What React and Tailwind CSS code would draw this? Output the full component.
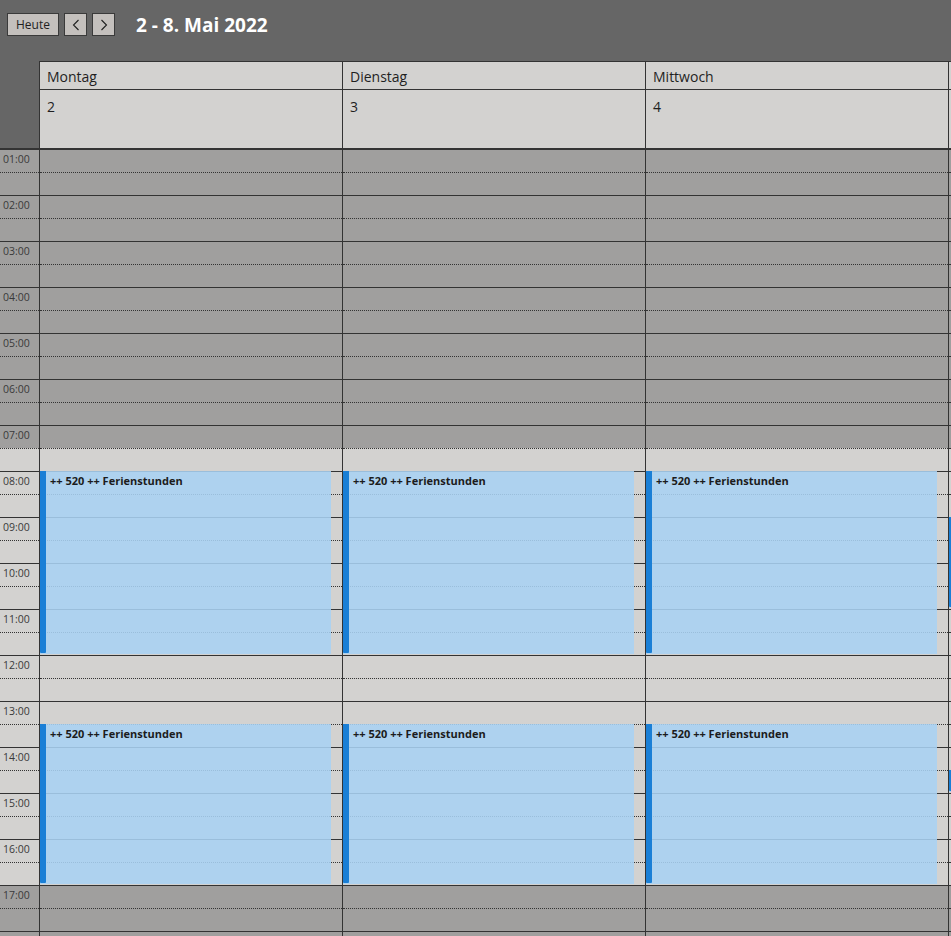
import React from "react";

const days = [
  { name: "Montag", date: 2, events: [{ start: 8, end: 12 }, { start: 13.5, end: 17 }] },
  { name: "Dienstag", date: 3, events: [{ start: 8, end: 12 }, { start: 13.5, end: 17 }] },
  { name: "Mittwoch", date: 4, events: [{ start: 8, end: 12 }, { start: 13.5, end: 17 }] },
  { name: "Donnerstag", date: 5, events: [{ start: 9, end: 11 }, { start: 14.5, end: 15 }] },
];

const hours = Array.from({ length: 23 }, (_, i) => i + 1);
const HOUR = 46;

const pad = (n) => String(n).padStart(2, "0");

// Arbeitszeit 07:30 - 17:00 hell, sonst dunkel
const slotBg = (t) => (t < 7.5 || t >= 17 ? "bg-[#a09f9e]" : "bg-[#d3d2d0]");

const Chevron = ({ dir }) => (
  <svg width="8" height="12" viewBox="0 0 8 12" className="block">
    {dir === "left" ? (
      <polyline points="6.5,1 1.5,6 6.5,11" fill="none" stroke="#1f1f1f" strokeWidth="1.1" />
    ) : (
      <polyline points="1.5,1 6.5,6 1.5,11" fill="none" stroke="#1f1f1f" strokeWidth="1.1" />
    )}
  </svg>
);

const Slots = ({ label }) => (
  <div>
    {hours.map((h) => (
      <div key={h}>
        <div className={`h-[23px] border-t border-[#333] ${slotBg(h)}`}>
          {label && (
            <div className="pl-[3px] pt-[4px] text-[10.5px] leading-none text-[#3a3a3a]">{pad(h)}:00</div>
          )}
        </div>
        <div className={`h-[23px] border-t border-dotted border-[#333] ${slotBg(h + 0.5)}`} />
      </div>
    ))}
  </div>
);

const Event = ({ ev }) => (
  <div
    className="absolute left-0 w-[291px] flex bg-[rgba(169,210,242,0.88)]"
    style={{ top: (ev.start - 1) * HOUR, height: (ev.end - ev.start) * HOUR - 1 }}
  >
    <div className="w-[6px] h-[calc(100%-1px)] bg-[#1a7fd6] rounded-b-[1px] shrink-0" />
    <div className="pl-[4px] pt-[3px] text-[11px] font-bold leading-[14px] text-[#1c1c1c] whitespace-nowrap">
      ++ 520 ++ Ferienstunden
    </div>
  </div>
);

export default function App() {
  return (
    <div
      className="w-full h-[936px] overflow-hidden bg-[#666]"
      style={{ fontFamily: '"Open Sans", "Noto Sans", sans-serif' }}
    >
      {/* Toolbar */}
      <div className="h-[61px] flex items-start pt-[13px] pl-[7px]">
        <button className="w-[52px] h-[23px] border border-[#3a3a3a] bg-[#c4c0bd] text-[12px] leading-none text-[#1f1f1f]">
          Heute
        </button>
        <button className="ml-[5px] w-[23px] h-[23px] border border-[#3a3a3a] bg-[#c4c0bd] flex items-center justify-center">
          <Chevron dir="left" />
        </button>
        <button className="ml-[5px] w-[23px] h-[23px] border border-[#3a3a3a] bg-[#c4c0bd] flex items-center justify-center">
          <Chevron dir="right" />
        </button>
        <div className="ml-[21px] h-[24px] flex items-center text-[19px] font-bold text-white whitespace-nowrap">
          2 - 8. Mai 2022
        </div>
      </div>

      {/* Kopfzeile */}
      <div className="flex border-b border-[#333]">
        <div className="w-[39px] shrink-0" />
        {days.map((d) => (
          <div key={d.name} className="w-[303px] shrink-0 border-l border-t border-[#333] bg-[#d3d2d0] text-[14px] text-[#1f1f1f]">
            <div className="h-[28px] border-b border-[#333] flex items-center pl-[7px] pt-[1px]">{d.name}</div>
            <div className="h-[58px] pl-[7px] pt-[7px] leading-[20px]">{d.date}</div>
          </div>
        ))}
      </div>

      {/* Raster */}
      <div className="flex">
        <div className="w-[39px] shrink-0">
          <Slots label />
        </div>
        {days.map((d) => (
          <div key={d.name} className="relative w-[303px] shrink-0 border-l border-[#333]">
            <Slots />
            {d.events.map((ev, i) => (
              <Event key={i} ev={ev} />
            ))}
          </div>
        ))}
      </div>
    </div>
  );
}
